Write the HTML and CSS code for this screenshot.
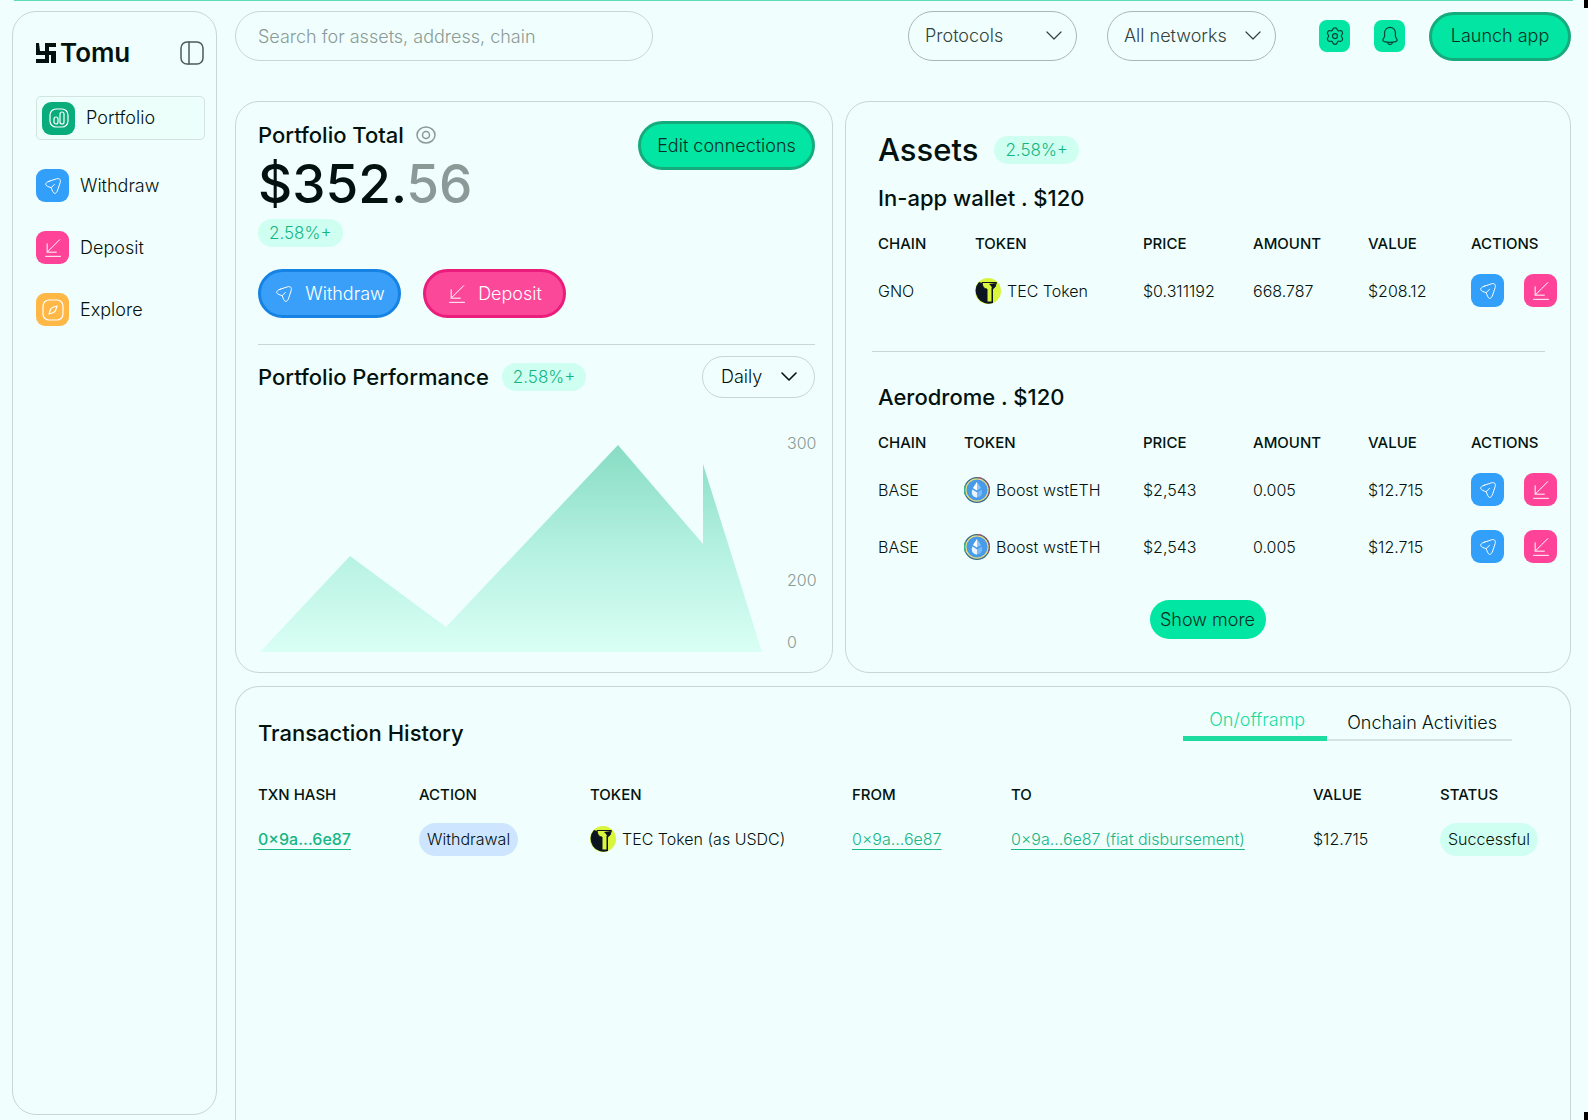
FILE: index.html
```html
<!DOCTYPE html>
<html lang="en">
<head>
<meta charset="utf-8">
<title>Tomu – Portfolio</title>
<meta name="viewport" content="width=device-width, initial-scale=1">
<link rel="stylesheet" href="styles.css">
</head>
<body>
<svg class="defs" aria-hidden="true">
  <symbol id="send" viewBox="0 0 24 24"><path d="M7.400 6.300 15.900 3.500c3.800-1.300 5.900.9 4.600 4.600l-2.800 8.500c-1.900 5.700-5 5.700-6.900 0l-.9-2.500-2.500-.9c-5.700-1.900-5.700-5 0-6.900ZM10.100 13.700l3.600-3.600"/></symbol>
  <symbol id="receive" viewBox="0 0 24 24"><path d="M20 2 5 17M5 7v10h11M3 22h18"/></symbol>
  <symbol id="chevron" viewBox="0 0 16 10"><path d="m1 1 7 7 7-7"/></symbol>
  <symbol id="tec" viewBox="0 0 26 26"><circle cx="13" cy="13" r="13" fill="#d9f53c"/><path d="M4 4A13 13 0 0 0 18 25V10l3-5H7Z" fill="#0b1420"/><path d="M7 4.500h14.500L20 9l-3 1v14h-5V11c-2.500 0-4.500-2-5-6.500Z" fill="#d9f53c" stroke="#0b1420"/><path d="m14 6 7-1-1 4-2.500 3C17 9 16 7.500 14 6Z" fill="#0b1420"/></symbol>
  <symbol id="eth" viewBox="0 0 26 26"><circle cx="13" cy="13" r="12.400" fill="#e9dc7e" stroke="#356a8c" stroke-width="1.200"/><path d="M13 .6a12.400 12.400 0 0 1 11 18" fill="none" stroke="#b0476e" stroke-width="1.200" stroke-dasharray="2 1"/><path d="M2 19A12.400 12.400 0 0 1 2 7" fill="none" stroke="#35b58c" stroke-width="1.200"/><circle cx="13" cy="13" r="10.500" fill="#479be8"/><path d="m13 5 4 6-4 2.500L9 11Z" fill="#8ec5fb"/><path d="m13 5v8.500L9 11Z" fill="#fff"/><path d="m8.500 12.500 4.500 3 4.500-3c2 4-.5 8-4.500 8s-6.500-4-4.500-8Z" fill="#79b8f7"/><path d="m8.500 12.500 4.500 3v5c-4 0-6.500-4-4.500-8Z" fill="#e8f4ff"/></symbol>
</svg>

<div class="app">
  <aside class="sidebar">
    <div class="brand">
      <a class="logo" href="#">
        <svg class="logo-mark" viewBox="0 0 20 20" aria-hidden="true"><path d="M0 0h3l1 8h5V0h11v4h-7v4h7v12h-5v-8h-2v8H0v-4h9v-4H0Z"/></svg>
        <span>Tomu</span>
      </a>
      <button class="toggle" aria-label="Collapse sidebar"><svg class="line" viewBox="0 0 24 24"><rect x="1" y="1" width="22" height="22" rx="6"/><path d="M9 1v22"/></svg></button>
    </div>
    <nav class="nav">
      <a class="nav-item active" href="#"><span class="tile green"><svg class="icon-lg line" viewBox="0 0 24 24"><rect x="3" y="3" width="18" height="18" rx="6"/><rect x="7" y="11" width="4" height="7" rx="2"/><rect x="13" y="6" width="4" height="12" rx="2"/></svg></span>Portfolio</a>
      <a class="nav-item" href="#"><span class="tile blue"><svg class="icon line"><use href="#send"/></svg></span>Withdraw</a>
      <a class="nav-item" href="#"><span class="tile pink"><svg class="icon line"><use href="#receive"/></svg></span>Deposit</a>
      <a class="nav-item" href="#"><span class="tile amber"><svg class="icon-lg line" viewBox="0 0 24 24"><rect x="2" y="2" width="20" height="20" rx="6"/><path d="m16 8-1.300 4c-.5 1.500-1.200 2.200-2.700 2.700L8 16l1.300-4c.5-1.500 1.200-2.200 2.700-2.700Z"/></svg></span>Explore</a>
    </nav>
  </aside>

  <div class="content">
    <header class="topbar">
      <input class="search" type="search" aria-label="Search" placeholder="Search for assets, address, chain">
      <div class="filters">
        <div class="select"><select aria-label="Protocols"><option>Protocols</option></select><svg class="line chevron"><use href="#chevron"/></svg></div>
        <div class="select"><select aria-label="Networks"><option>All networks</option></select><svg class="line chevron"><use href="#chevron"/></svg></div>
      </div>
      <div class="tools">
        <button class="tool" aria-label="Settings"><svg class="line" viewBox="0 0 24 24"><path d="M9.200 4.200C10 1.400 14 1.400 14.800 4.200c.4 1.400 1.300 1.900 2.700 1.500 2.800-.8 4.800 2.600 2.800 4.700-1 1-1 2.200 0 3.200 2 2.100 0 5.500-2.800 4.700-1.400-.4-2.300.1-2.700 1.500-.8 2.800-4.800 2.800-5.600 0-.4-1.400-1.300-1.900-2.700-1.500-2.800.8-4.800-2.600-2.800-4.700 1-1 1-2.200 0-3.200-2-2.100 0-5.500 2.800-4.700 1.400.4 2.300-.1 2.700-1.500Z"/><circle cx="12" cy="12" r="3"/></svg></button>
        <button class="tool" aria-label="Notifications"><svg class="line" viewBox="0 0 24 24"><path d="M12 1.500A6.500 6.500 0 0 0 5.500 8v4.500L3.700 16c-.6 1.200 0 2.500 1.500 2.800 4.500 1 9.100 1 13.600 0 1.500-.3 2.100-1.600 1.500-2.800l-1.800-3.500V8A6.500 6.500 0 0 0 12 1.500ZM9 20c1 3 5 3 6 0"/></svg></button>
        <button class="btn btn-green launch">Launch app</button>
      </div>
    </header>

    <main class="cards">
      <section class="card portfolio">
        <div class="total">
          <div>
            <h2 class="heading">Portfolio Total <button class="eye" aria-label="Hide balance"><svg class="line" viewBox="0 0 20 18"><ellipse cx="10" cy="9" rx="9" ry="8"/><circle cx="10" cy="9" r="3.500"/></svg></button></h2>
            <p class="amount">$352.<span>56</span></p>
            <span class="badge">2.58%+</span>
          </div>
          <button class="btn btn-green edit">Edit connections</button>
        </div>
        <div class="buttons">
          <button class="btn btn-blue"><svg class="icon line"><use href="#send"/></svg>Withdraw</button>
          <button class="btn btn-pink"><svg class="icon line"><use href="#receive"/></svg>Deposit</button>
        </div>
        <div class="performance">
          <h2 class="heading">Portfolio Performance <span class="badge">2.58%+</span></h2>
          <div class="select daily"><select aria-label="Period"><option>Daily</option></select><svg class="line chevron"><use href="#chevron"/></svg></div>
        </div>
        <div class="chart">
          <svg viewBox="0 0 502 208" preserveAspectRatio="none" role="img" aria-label="Portfolio performance">
            <defs><linearGradient id="area" x1="0" y1="0" x2="0" y2="1"><stop offset="0" stop-color="#87dcc2"/><stop offset=".5" stop-color="#b4f1e0"/><stop offset="1" stop-color="#dafff4"/></linearGradient></defs>
            <path d="M0 208 90 112 186 183 358 1 443 100V20L502 208Z" fill="url(#area)"/>
          </svg>
          <div class="axis"><span>300</span><span>200</span><span>0</span></div>
        </div>
      </section>

      <section class="card assets">
        <h1 class="title">Assets <span class="badge">2.58%+</span></h1>
        <h2 class="heading">In-app wallet . $120</h2>
        <table class="holdings wallet">
          <thead><tr><th class="c-chain">CHAIN</th><th class="c-token">TOKEN</th><th class="c-price">PRICE</th><th class="c-amount">AMOUNT</th><th class="c-value">VALUE</th><th>ACTIONS</th></tr></thead>
          <tbody>
            <tr><td>GNO</td><td><span class="token"><svg><use href="#tec"/></svg>TEC Token</span></td><td>$0.311192</td><td>668.787</td><td>$208.12</td><td><span class="actions"><button class="tile blue" aria-label="Withdraw"><svg class="icon line"><use href="#send"/></svg></button><button class="tile pink" aria-label="Deposit"><svg class="icon line"><use href="#receive"/></svg></button></span></td></tr>
          </tbody>
        </table>
        <hr>
        <h2 class="heading">Aerodrome . $120</h2>
        <table class="holdings">
          <thead><tr><th class="c-chain">CHAIN</th><th class="c-token">TOKEN</th><th class="c-price">PRICE</th><th class="c-amount">AMOUNT</th><th class="c-value">VALUE</th><th>ACTIONS</th></tr></thead>
          <tbody>
            <tr><td>BASE</td><td><span class="token"><svg><use href="#eth"/></svg>Boost wstETH</span></td><td>$2,543</td><td>0.005</td><td>$12.715</td><td><span class="actions"><button class="tile blue" aria-label="Withdraw"><svg class="icon line"><use href="#send"/></svg></button><button class="tile pink" aria-label="Deposit"><svg class="icon line"><use href="#receive"/></svg></button></span></td></tr>
            <tr><td>BASE</td><td><span class="token"><svg><use href="#eth"/></svg>Boost wstETH</span></td><td>$2,543</td><td>0.005</td><td>$12.715</td><td><span class="actions"><button class="tile blue" aria-label="Withdraw"><svg class="icon line"><use href="#send"/></svg></button><button class="tile pink" aria-label="Deposit"><svg class="icon line"><use href="#receive"/></svg></button></span></td></tr>
          </tbody>
        </table>
        <button class="more">Show more</button>
      </section>

      <section class="card history">
        <div class="history-head">
          <h2 class="heading">Transaction History</h2>
          <div class="tabs" role="tablist">
            <button class="tab selected" role="tab" aria-selected="true">On/offramp</button>
            <button class="tab" role="tab" aria-selected="false">Onchain Activities</button>
          </div>
        </div>
        <table class="txns">
          <thead><tr><th class="t-hash">TXN HASH</th><th class="t-action">ACTION</th><th class="t-token">TOKEN</th><th class="t-from">FROM</th><th class="t-to">TO</th><th class="t-value">VALUE</th><th>STATUS</th></tr></thead>
          <tbody><tr><td><a class="strong" href="#">0×9a...6e87</a></td><td><span class="pill pill-blue">Withdrawal</span></td><td><span class="token"><svg><use href="#tec"/></svg>TEC Token (as USDC)</span></td><td><a href="#">0×9a...6e87</a></td><td><a href="#">0×9a...6e87 (fiat disbursement)</a></td><td>$12.715</td><td><span class="pill pill-green">Successful</span></td></tr></tbody>
        </table>
      </section>
    </main>
  </div>
</div>
</body>
</html>
```
FILE: styles.css
```css
* { box-sizing: border-box; }

:root {
  --bg: #f0fffd;
  --ink: #03120e;
  --border: #c7d7d3;
  --green: #03e5a2;
  --muted: #8b9a96;
}

body {
  margin: 0;
  background: var(--bg);
  color: var(--ink);
  font: 350 18px/24px Inter, "Liberation Sans", sans-serif;
}

/* accent line and corner marks on the window frame */
body::before {
  content: "";
  position: fixed;
  top: 0;
  left: 14px;
  right: 15px;
  height: 1px;
  background: #5fdcb4;
}
body::after {
  content: "";
  position: fixed;
  top: 0;
  right: 0;
  bottom: 0;
  width: 4px;
  background: linear-gradient(#000, #000) top / 4px 8px no-repeat, linear-gradient(#000, #000) bottom / 4px 8px no-repeat;
}

h1, h2, p { margin: 0; }
a { color: inherit; }
button, input, select { font: inherit; color: inherit; }
button { padding: 0; border: 0; background: none; cursor: pointer; white-space: nowrap; }
svg { display: block; flex: none; }

.defs { position: absolute; width: 0; height: 0; }
.line { fill: none; stroke: currentColor; stroke-width: 1.2; stroke-linecap: round; stroke-linejoin: round; }
.icon { width: 20px; height: 20px; }
.icon-lg { width: 24px; height: 24px; }

.app {
  display: flex;
  gap: 18px;
  height: 100vh;
  padding: 11px 17px 0 12px;
  overflow: hidden;
}

/* sidebar */
.sidebar {
  flex: none;
  width: 205px;
  margin-bottom: 5px;
  padding: 23px 11px 24px 23px;
  border: 1px solid var(--border);
  border-radius: 24px;
}
.brand { display: flex; align-items: center; justify-content: space-between; height: 36px; padding-right: 1px; }
.logo { display: flex; align-items: center; gap: 4px; font-size: 26px; font-weight: 600; line-height: 36px; text-decoration: none; }
.logo-mark { width: 20px; height: 20px; fill: var(--ink); }
.toggle { color: #4d5b58; }
.toggle svg { width: 24px; height: 24px; stroke-width: 1.5; }

.nav { display: flex; flex-direction: column; gap: 29px; margin-top: 25px; }
.nav-item { display: flex; align-items: center; gap: 11px; text-decoration: none; }
.nav-item.active { height: 44px; padding-left: 5px; border: 1px solid #d3e4e0; border-radius: 5px; background: #edfffa; }

.tile { display: grid; place-items: center; flex: none; width: 33px; height: 33px; border-radius: 9px; color: #fff; }
.green { background: #09ad7c; }
.blue { background: #329ffb; }
.pink { background: #ff4398; }
.amber { background: #ffb745; }

/* top bar */
.content { display: flex; flex: 1; flex-direction: column; gap: 40px; min-width: 0; }
.topbar { display: flex; align-items: center; height: 50px; }
.search { flex: 0 1 418px; min-width: 0; height: 50px; padding: 0 22px; border: 1px solid var(--border); border-radius: 25px; outline: 0; background: transparent; }
.search::placeholder { color: var(--muted); opacity: 1; }
.filters { display: flex; gap: 30px; margin-left: auto; color: #33423e; }

.select { display: grid; align-items: center; width: 169px; height: 50px; }
.select select { grid-area: 1 / 1; width: 100%; height: 100%; padding: 0 16px; border: 1px solid #a9b8b4; border-radius: 25px; outline: 0; background: transparent; appearance: none; }
.chevron { grid-area: 1 / 1; justify-self: end; width: 16px; height: 10px; margin-right: 15px; pointer-events: none; }

.tools { display: flex; align-items: center; gap: 24px; margin-left: 43px; }
.tool { display: grid; place-items: center; width: 31px; height: 32px; border-radius: 8px; background: var(--green); color: #06483a; }
.tool svg { width: 20px; height: 20px; stroke-width: 1.5; }

.btn { display: flex; align-items: center; justify-content: center; height: 49px; border: 3px solid; border-radius: 25px; }
.btn-green { border-color: #16ab7d; background: var(--green); color: #063026; }
.btn-blue { gap: 11px; width: 143px; border-color: #1683e4; background: #3a9ff8; color: #fff; }
.btn-pink { gap: 11px; width: 143px; border-color: #ea1c7c; background: #fb4899; color: #fff; }
.launch { width: 142px; }
.edit { width: 177px; }

/* cards */
.cards { display: grid; flex: 1; grid-template-columns: 598fr 726fr; grid-template-rows: auto 1fr; gap: 13px 12px; min-height: 0; }
.card { min-width: 0; border: 1px solid var(--border); border-radius: 24px; }
.heading { display: flex; align-items: center; font-size: 22px; font-weight: 450; line-height: 28px; }
.badge { display: inline-block; height: 28px; padding: 0 11px; border-radius: 14px; background: #cffff0; color: #12b582; font-size: 17px; font-weight: 350; line-height: 28px; }

.portfolio { display: flex; flex-direction: column; padding: 19px 17px 20px 22px; }
.total { display: flex; align-items: flex-start; justify-content: space-between; }
.eye { margin-left: 12px; color: var(--muted); }
.eye svg { width: 20px; height: 18px; stroke-width: 1.5; }
.amount { font-size: 53px; font-weight: 500; line-height: 70px; }
.amount span { color: var(--muted); }
.total .badge { display: block; width: fit-content; }
.buttons { display: flex; gap: 22px; margin-top: 22px; padding-bottom: 26px; border-bottom: 1px solid var(--border); }
.performance { display: flex; align-items: center; justify-content: space-between; margin-top: 11px; }
.performance .badge { margin-left: 13px; }
.daily { width: 113px; height: 42px; }
.daily select { border-color: var(--border); padding: 0 18px; }
.daily .chevron { margin-right: 18px; stroke-width: 1.6; }
.chart { display: flex; flex: 1; justify-content: space-between; align-items: flex-end; padding-left: 2px; }
.chart > svg { flex: 1; height: 208px; }
.axis { display: grid; grid-template-rows: 137px 62px 20px; width: 28px; margin-left: 25px; color: var(--muted); font-size: 16px; line-height: 20px; }

.assets { display: flex; flex-direction: column; padding: 28px 13px 33px 32px; }
.title { display: flex; align-items: center; gap: 16px; font-size: 31px; font-weight: 450; line-height: 40px; }
.assets .heading { margin-top: 14px; }
.assets hr { width: calc(100% - 6px); height: 1px; margin: 32px 0 17px -6px; border: 0; background: var(--border); }

table { width: 100%; border-collapse: collapse; table-layout: fixed; font-size: 16px; line-height: 20px; white-space: nowrap; }
th { padding: 0; font-size: 15px; font-weight: 500; text-align: left; }
td { padding: 0; }
.token { display: flex; align-items: center; gap: 6px; }
.token svg { width: 26px; height: 26px; }

.holdings { margin-top: 22px; }
.holdings th { padding-bottom: 8px; }
.holdings td { height: 57px; }
.c-chain { width: 86px; }
.c-token { width: 179px; }
.wallet .c-chain { width: 97px; }
.wallet .c-token { width: 168px; }
.c-price { width: 110px; }
.c-amount { width: 115px; }
.c-value { width: 103px; }
.actions { display: flex; gap: 20px; }
.more { align-self: center; width: 116px; height: 39px; margin: 25px 20px 0 0; border-radius: 20px; background: #02e6a4; color: #063026; }

/* transaction history */
.history { grid-column: 1 / -1; border-bottom: 0; border-radius: 24px 24px 0 0; padding: 16px 22px; }
.history-head { display: flex; align-items: flex-start; justify-content: space-between; padding-right: 36px; }
.history .heading { margin-top: 16px; }
.tabs { display: flex; }
.tab { height: 38px; padding: 4px 15px 0 20px; border-bottom: 2px solid #d5e5e1; }
.tab.selected { padding: 0 22px 0 26px; border-bottom: 5px solid #1cdc9f; color: #1cdc9f; }
.txns { margin-top: 38px; }
.txns td { height: 68px; }
.txns a { color: #17b585; text-underline-offset: 4px; }
.txns a.strong { font-weight: 450; }
.t-hash { width: 161px; }
.t-action { width: 171px; }
.t-token { width: 262px; }
.t-from { width: 159px; }
.t-to { width: 302px; }
.t-value { width: 127px; }
.pill { display: inline-block; height: 33px; padding: 0 8px; border-radius: 17px; line-height: 33px; }
.pill-blue { background: #cde5ff; }
.pill-green { background: #cffff0; }
```
